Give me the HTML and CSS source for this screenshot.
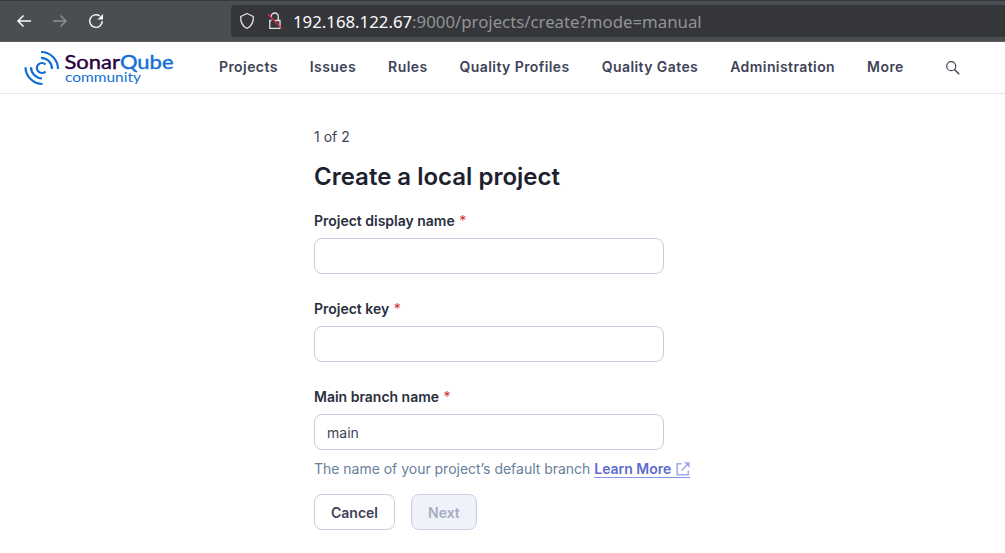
FILE: index.html
```html
<!DOCTYPE html>
<html lang="en">
<head>
<meta charset="utf-8">
<title>Create a local project</title>
<link rel="stylesheet" href="styles.css">
</head>
<body>
<div class="browser">
  <svg class="browser-icon" width="16" height="16" viewBox="0 0 16 16"><path d="M15 8H2M7.500 2.500 2 8l5.500 5.500" stroke="#fbfbfe" stroke-width="1.500"/></svg>
  <svg class="browser-icon" width="16" height="16" viewBox="0 0 16 16"><path d="M1 8h13M8.500 2.500 14 8l-5.500 5.500" stroke="#8b8c90" stroke-width="1.500"/></svg>
  <svg class="browser-icon" width="16" height="16" viewBox="0 0 16 16"><path d="M14.300 8A6.300 6.300 0 1 1 11.800 3" stroke="#fbfbfe" stroke-width="1.400"/><path d="M15 1v5.500H9.500z" fill="#fbfbfe"/></svg>
  <div class="address">
    <svg class="shield" width="16" height="18" viewBox="0 0 16 18"><path d="M8 1.500 14.300 4.500C14.600 10 12.500 14.300 8 16.500 3.500 14.300 1.400 10 1.700 4.500Z" stroke="#e3e3e6" stroke-width="1.300" stroke-linejoin="round"/></svg>
    <svg class="lock" width="16" height="18" viewBox="0 0 16 18"><path d="M4.300 5.500V4.500A3.500 3.500 0 0 1 11.300 4.500V8M4.500 8.500H2.800V16.300H13V8.500H8" stroke="#e3e3e6" stroke-width="1.300"/><path d="M1 2 14.500 16.500" stroke="#e22850" stroke-width="1.400"/></svg>
    <span class="url"><span class="host">192.168.122.67</span>:9000/projects/create?mode=manual</span>
  </div>
</div>
<header class="header">
  <svg class="logo" width="152" height="38" viewBox="0 0 152 38">
    <g stroke="#126ed3" stroke-width="2.200">
      <path d="M21.500 15.600A5 5 0 1 0 21.500 22.400"/>
      <path d="M17 8.800A11 11 0 0 1 28 20M17 3A17 17 0 0 1 34 20"/>
      <path d="M7 18.200A11.500 11.500 0 0 0 18 29.500M1.500 18.200A17 17 0 0 0 18.500 35"/>
    </g>
    <text class="logo-name" x="40.500" y="20" textLength="109" lengthAdjust="spacingAndGlyphs"><tspan class="logo-sonar">Sonar</tspan><tspan>Qube</tspan></text>
    <text class="logo-edition" x="41" y="33" textLength="76" lengthAdjust="spacingAndGlyphs">community</text>
  </svg>
  <nav class="nav">
    <a>Projects</a><a>Issues</a><a>Rules</a><a>Quality Profiles</a><a>Quality Gates</a><a>Administration</a><a>More</a>
  </nav>
  <svg class="search" width="16" height="16" viewBox="0 0 16 16"><circle cx="6.200" cy="6.200" r="4.500" stroke="#3e4357" stroke-width="1.200"/><path d="m9.500 9.500 4.700 4.700" stroke="#3e4357" stroke-width="1.500"/></svg>
</header>
<main class="page">
  <div class="step">1 of 2</div>
  <h1 class="title">Create a local project</h1>
  <form>
    <div class="field"><label class="label" for="name">Project display name <span class="required">*</span></label><input class="input" id="name"></div>
    <div class="field"><label class="label" for="key">Project key <span class="required">*</span></label><input class="input" id="key"></div>
    <div class="field"><label class="label" for="branch">Main branch name <span class="required">*</span></label><input class="input" id="branch" value="main"></div>
    <div class="help">The name of your project’s default branch <a class="learn">Learn More<svg width="14" height="14" viewBox="0 0 14 14"><path d="M5.500 1.700H1.200V12.800H12.300V8.500M5.500 8.500 11 3" stroke="#9fa9ed" stroke-width="1.500"/><path d="M8 .3h5.700V6z" fill="#9fa9ed"/></svg></a></div>
    <div class="actions"><button class="button" type="button">Cancel</button><button class="button next" type="button" disabled>Next</button></div>
  </form>
</main>
</body>
</html>
```
FILE: styles.css
```css
* { box-sizing: border-box; }
body {
  margin: 0;
  height: 553px;
  overflow: hidden;
  background: #fff;
  font: 14px/20px Inter, sans-serif;
  color: #3e4357;
}
svg { display: block; flex: none; fill: none; }
.browser {
  display: flex;
  align-items: center;
  height: 42px;
  padding-left: 16px;
  background: #4a4d51;
  border-top: 1px solid #36383c;
  border-bottom: 1px solid #5b5e60;
}
.browser-icon { margin-right: 20px; }
.address {
  display: flex;
  align-items: center;
  flex: 1;
  height: 32px;
  margin-left: 107px;
  padding-left: 8px;
  background: #35363a;
  border-radius: 4px 0 0 4px;
}
.lock { margin-left: 12px; }
.url {
  margin-left: 10px;
  padding-top: 1px;
  font: 16.8px/24px "Noto Sans", sans-serif;
  color: #929397;
  white-space: nowrap;
}
.host { color: #fbfbfe; }
.header {
  display: flex;
  align-items: center;
  height: 52px;
  padding-left: 24px;
  border-bottom: 1px solid #e6e6e8;
}
.logo-name {
  font: 400 19px Lato, sans-serif;
  fill: #126ed3;
  stroke: #126ed3;
  stroke-width: .4px;
}
.logo-sonar { fill: #290042; stroke: #290042; }
.logo-edition { font: 14px Lato, sans-serif; fill: #126ed3; }
.nav {
  display: flex;
  gap: 32px;
  margin: -2px 0 0 43px;
  font-weight: 600;
  letter-spacing: .42px;
  white-space: nowrap;
}
.search { margin-left: 41px; }
.page { width: 400px; margin: 33px 0 0 314px; }
.title {
  margin: 14px 0 18px;
  font-size: 24px;
  line-height: 32px;
  font-weight: 600;
  color: #1d212f;
}
.field { height: 88px; }
.label {
  display: block;
  margin-bottom: 7px;
  font-weight: 600;
  letter-spacing: -.01px;
  color: #2a2f40;
}
.required { margin-left: 1px; font-weight: 400; color: #d02f3a; }
.input {
  display: block;
  width: 350px;
  height: 36px;
  padding: 0 12px;
  border: 1px solid #c5cddf;
  border-radius: 8px;
  background: #fff;
  font: inherit;
  color: #3e4357;
}
.help { height: 20px; margin-top: -16px; color: #69809b; letter-spacing: -.02px; white-space: nowrap; }
.learn {
  display: inline-flex;
  align-items: center;
  gap: 5px;
  height: 19px;
  padding-top: 1px;
  border-bottom: 1px solid #8793e8;
  font-weight: 600;
  color: #5d6cd0;
  vertical-align: top;
}
.actions { display: flex; gap: 16px; margin-top: 15px; }
.button {
  height: 36px;
  padding: 1px 16px 0;
  border: 1px solid #c5cdde;
  border-radius: 8px;
  background: #fff;
  font: 600 14px/20px Inter, sans-serif;
  color: #3e4357;
}
.next { background: #eff2f9; color: #a6adc3; }
```
